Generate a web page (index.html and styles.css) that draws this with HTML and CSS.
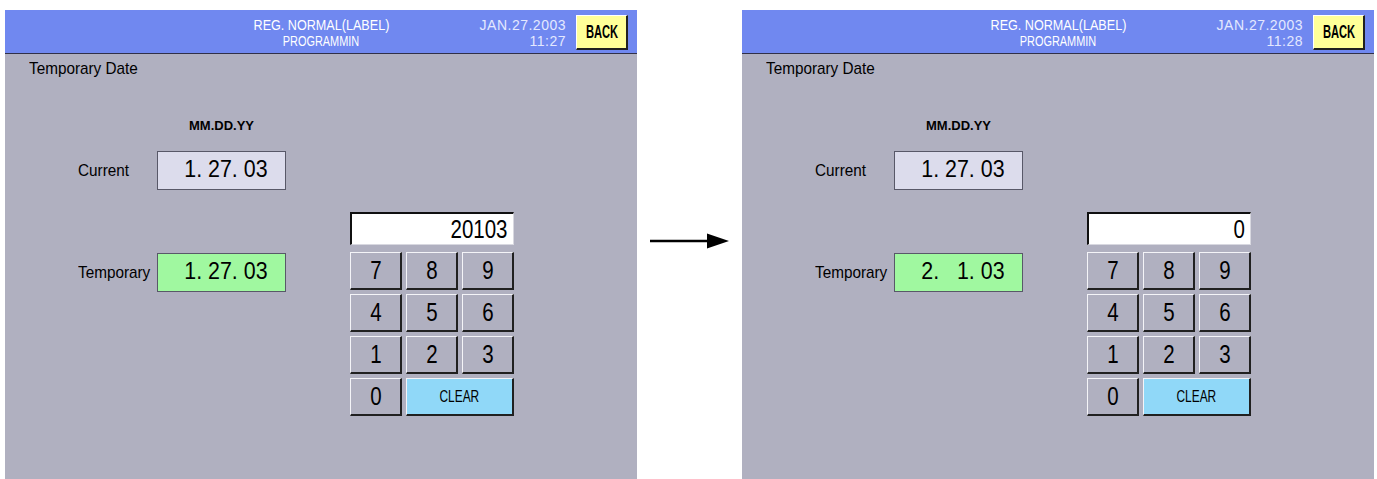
FILE: index.html
```html
<!DOCTYPE html>
<html>
<head>
<meta charset="utf-8">
<title>Temporary Date</title>
<link rel="stylesheet" href="styles.css">
</head>
<body>
<div class="page">
  <section class="panel">
    <header class="bar">
      <div class="bar-spacer"></div>
      <div class="bar-title">
        <div><span class="nx t1">REG. NORMAL(LABEL)</span></div>
        <div><span class="nx t2">PROGRAMMIN</span></div>
      </div>
      <div class="bar-right">
        <div class="clock"><div>JAN.27.2003</div><div>11:27</div></div>
        <div class="back"><span class="nx">BACK</span></div>
      </div>
    </header>
    <div class="screen-title"><span class="nx">Temporary Date</span></div>
    <div class="main">
      <div class="dates">
        <div class="fmt">MM.DD.YY</div>
        <div class="row row-current">
          <span class="label"><span class="nx">Current</span></span>
          <div class="value value-current"><span class="nx">1<span class="cell">.</span>27<span class="cell">.</span>03</span></div>
        </div>
        <div class="row row-temp">
          <span class="label"><span class="nx">Temporary</span></span>
          <div class="value value-temp"><span class="nx">1<span class="cell">.</span>27<span class="cell">.</span>03</span></div>
        </div>
      </div>
      <div class="keypad">
        <div class="entry"><span class="nx">20103</span></div>
        <div class="keys">
          <div class="key"><span class="nx">7</span></div><div class="key"><span class="nx">8</span></div><div class="key"><span class="nx">9</span></div>
          <div class="key"><span class="nx">4</span></div><div class="key"><span class="nx">5</span></div><div class="key"><span class="nx">6</span></div>
          <div class="key"><span class="nx">1</span></div><div class="key"><span class="nx">2</span></div><div class="key"><span class="nx">3</span></div>
          <div class="key"><span class="nx">0</span></div><div class="key key-clear"><span class="nx">CLEAR</span></div>
        </div>
      </div>
    </div>
  </section>

  <div class="arrow">
    <svg width="82" height="16" viewBox="0 0 82 16" aria-hidden="true">
      <line x1="2" y1="8" x2="62" y2="8" stroke="#000" stroke-width="2.6"/>
      <polygon points="59,0.5 81,8 59,15.5" fill="#000"/>
    </svg>
  </div>

  <section class="panel">
    <header class="bar">
      <div class="bar-spacer"></div>
      <div class="bar-title">
        <div><span class="nx t1">REG. NORMAL(LABEL)</span></div>
        <div><span class="nx t2">PROGRAMMIN</span></div>
      </div>
      <div class="bar-right">
        <div class="clock"><div>JAN.27.2003</div><div>11:28</div></div>
        <div class="back"><span class="nx">BACK</span></div>
      </div>
    </header>
    <div class="screen-title"><span class="nx">Temporary Date</span></div>
    <div class="main">
      <div class="dates">
        <div class="fmt">MM.DD.YY</div>
        <div class="row row-current">
          <span class="label"><span class="nx">Current</span></span>
          <div class="value value-current"><span class="nx">1<span class="cell">.</span>27<span class="cell">.</span>03</span></div>
        </div>
        <div class="row row-temp">
          <span class="label"><span class="nx">Temporary</span></span>
          <div class="value value-temp"><span class="nx">2<span class="cell">.</span><span class="blank">0</span>1<span class="cell">.</span>03</span></div>
        </div>
      </div>
      <div class="keypad">
        <div class="entry"><span class="nx">0</span></div>
        <div class="keys">
          <div class="key"><span class="nx">7</span></div><div class="key"><span class="nx">8</span></div><div class="key"><span class="nx">9</span></div>
          <div class="key"><span class="nx">4</span></div><div class="key"><span class="nx">5</span></div><div class="key"><span class="nx">6</span></div>
          <div class="key"><span class="nx">1</span></div><div class="key"><span class="nx">2</span></div><div class="key"><span class="nx">3</span></div>
          <div class="key"><span class="nx">0</span></div><div class="key key-clear"><span class="nx">CLEAR</span></div>
        </div>
      </div>
    </div>
  </section>
</div>
</body>
</html>
```

FILE: styles.css
```css
html, body {
  margin: 0;
  padding: 0;
  background: #ffffff;
}

body {
  font-family: "Liberation Sans", Arial, sans-serif;
  color: #000;
}

/* narrow text: the terminal font is tall and condensed */
.nx {
  display: inline-block;
  white-space: nowrap;
  transform-origin: center center;
}

.page {
  display: flex;
  align-items: flex-start;
  padding: 10px 0 0 5px;
}

.panel {
  width: 632px;
  height: 469px;
  background: #b0b0c0;
  display: flex;
  flex-direction: column;
}

/* ---------- title bar ---------- */
.bar {
  height: 44px;
  box-sizing: border-box;
  background: #7088f0;
  border-bottom: 1px solid #303048;
  display: grid;
  grid-template-columns: 1fr auto 1fr;
  align-items: start;
}

.bar-title {
  color: #ffffff;
  font-size: 14px;
  line-height: 16px;
  text-align: center;
  padding-top: 7px;
}

.t1 {
  transform: scaleX(0.9);
}

.t2 {
  transform: scaleX(0.78);
}

.bar-right {
  display: flex;
  justify-content: flex-end;
  align-items: flex-start;
  gap: 10px;
  padding-right: 9px;
}

.clock {
  color: #e4e8ff;
  font-size: 14px;
  line-height: 16px;
  letter-spacing: 0.5px;
  text-align: right;
  padding-top: 7px;
}

.back {
  margin-top: 5px;
  width: 52px;
  height: 35px;
  box-sizing: border-box;
  background: #ffff98;
  border-top: 1px solid #ffffff;
  border-left: 1px solid #ffffff;
  border-right: 2px solid #202020;
  border-bottom: 2px solid #202020;
  font-weight: bold;
  font-size: 18px;
  display: flex;
  align-items: center;
  justify-content: center;
}

.back .nx {
  transform: scaleX(0.62);
}

/* ---------- body ---------- */
.screen-title {
  margin-top: 5px;
  padding-left: 24px;
  font-size: 17px;
  line-height: 20px;
}

.screen-title .nx {
  transform-origin: left center;
  transform: scaleX(0.9);
}

.main {
  display: flex;
  align-items: flex-start;
  margin-top: 39px;
}

.dates {
  display: flex;
  flex-direction: column;
  padding-left: 73px;
}

.fmt {
  margin-left: 79px;
  width: 129px;
  text-align: center;
  font-size: 13px;
  font-weight: bold;
  line-height: 16px;
}

.row {
  display: flex;
  align-items: center;
}

.row-current {
  margin-top: 17px;
}

.row-temp {
  margin-top: 63px;
}

.label {
  width: 79px;
  font-size: 17px;
}

.label .nx {
  transform-origin: left center;
  transform: scaleX(0.9);
}

.value {
  width: 129px;
  height: 39px;
  box-sizing: border-box;
  border: 1px solid #585868;
  text-align: right;
  padding-right: 17px;
  font-size: 23px;
  line-height: 34px;
  white-space: nowrap;
}

.value .nx {
  transform-origin: right center;
  transform: scaleX(0.93);
}

.value-current {
  background: #dcdcec;
}

.value-temp {
  background: #a0f8a0;
}

.cell {
  display: inline-block;
  width: 0.556em;
  text-align: left;
}

.blank {
  visibility: hidden;
}

/* ---------- keypad ---------- */
.keypad {
  margin-left: 64px;
  margin-top: 94px;
  width: 164px;
}

.entry {
  height: 33px;
  box-sizing: border-box;
  background: #ffffff;
  border-top: 2px solid #101010;
  border-left: 2px solid #101010;
  border-right: 1px solid #d8d8e0;
  border-bottom: 1px solid #d8d8e0;
  text-align: right;
  padding-right: 5px;
  font-size: 25px;
  line-height: 30px;
}

.entry .nx {
  transform-origin: right center;
  transform: scaleX(0.82);
}

.keys {
  margin-top: 7px;
  display: grid;
  grid-template-columns: repeat(3, 52px);
  grid-auto-rows: 38px;
  gap: 4px;
}

.key {
  box-sizing: border-box;
  background: #b0b0c0;
  border-top: 1px solid #f4f4f8;
  border-left: 1px solid #f4f4f8;
  border-right: 2px solid #202020;
  border-bottom: 2px solid #202020;
  font-size: 25px;
  display: flex;
  align-items: center;
  justify-content: center;
}

.key .nx {
  transform: scaleX(0.82);
}

.key-clear {
  grid-column: span 2;
  background: #90d8f8;
  font-size: 17px;
}

.key-clear .nx {
  transform: scaleX(0.7);
}

/* ---------- arrow ---------- */
.arrow {
  width: 105px;
  padding-top: 223px;
  padding-left: 11px;
  box-sizing: border-box;
}

.arrow svg {
  display: block;
}
```
